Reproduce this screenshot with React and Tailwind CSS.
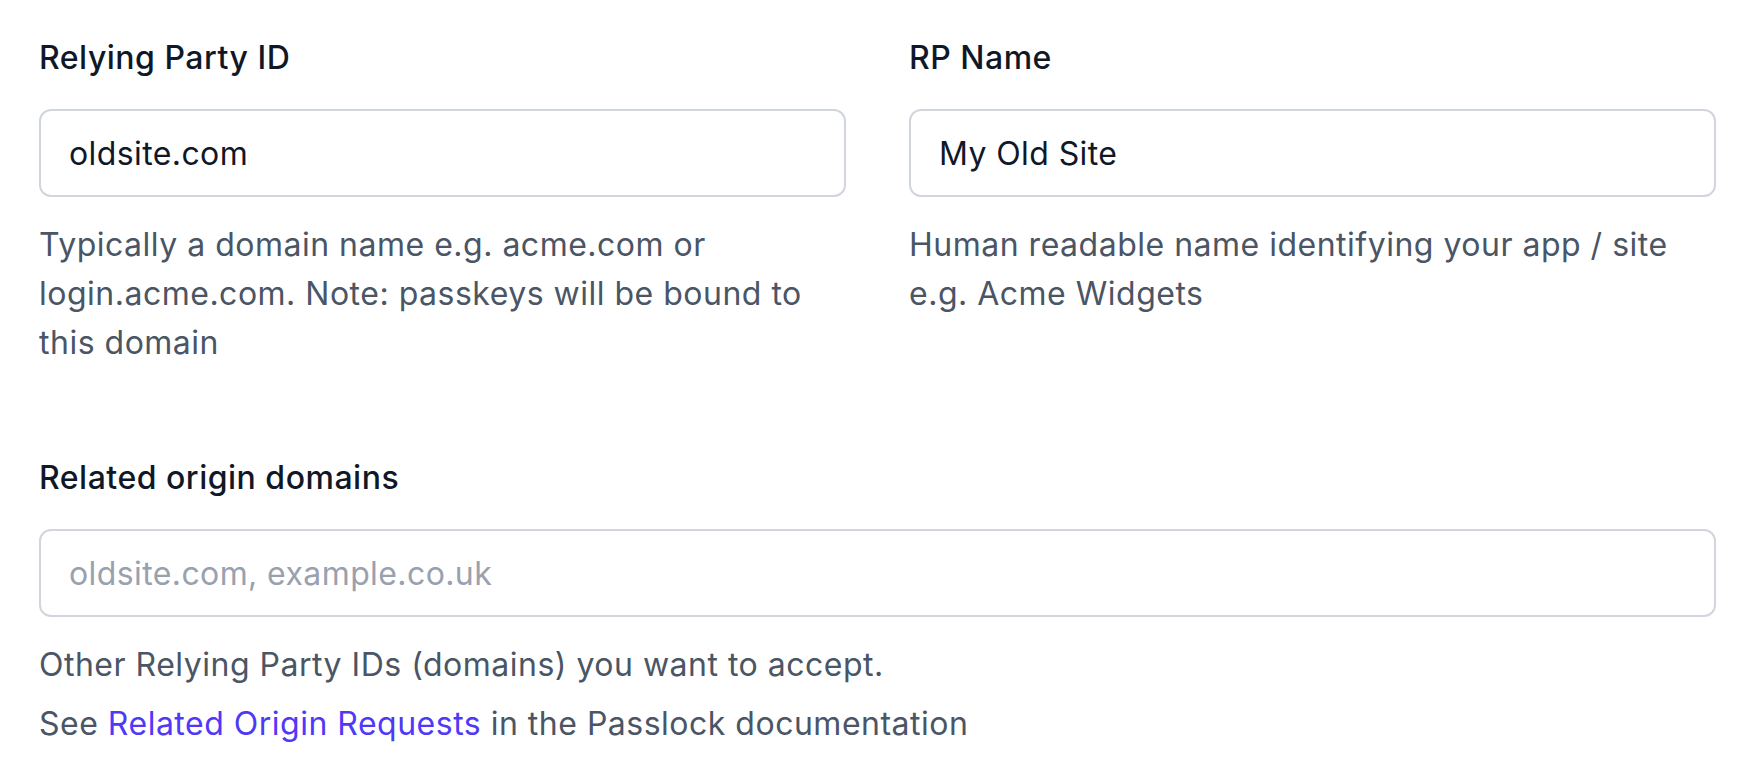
import React from 'react';

/**
 * Relying party settings form (rendered at 2x scale).
 */
function Field({ label, value, placeholder, children }) {
	return (
		<div className="flex flex-col min-w-0">
			<label className="text-[32px] leading-[48px] font-medium tracking-[0.5px] text-gray-900">{label}</label>
			<input
				type="text"
				defaultValue={value}
				placeholder={placeholder}
				className="mt-[27px] h-[88px] w-full rounded-[12px] border-2 border-gray-300 bg-white px-[28px] text-[32px] leading-[48px] tracking-[0.4px] text-gray-900 placeholder:text-gray-400 outline-none"
			/>
			{children}
		</div>
	);
}

export default function App() {
	return (
		<div
			className="min-h-[778px] w-full bg-white pl-[39px] pr-[42px] pt-[34px]"
			style={{ fontFamily: 'Inter, "Noto Sans", sans-serif' }}
		>
			<div className="grid grid-cols-2 gap-x-[63px] gap-y-[87px]">
				<Field label="Relying Party ID" value="oldsite.com">
					<p className="mt-[23px] text-[32px] leading-[49px] tracking-[0.5px] text-gray-600">
						Typically a domain name e.g. acme.com or login.acme.com. Note: passkeys will be bound to this domain
					</p>
				</Field>

				<Field label="RP Name" value="My Old Site">
					<p className="mt-[23px] text-[32px] leading-[49px] tracking-[0.5px] text-gray-600">
						Human readable name identifying your app / site e.g. Acme Widgets
					</p>
				</Field>

				<div className="col-span-2">
					<Field label="Related origin domains" placeholder="oldsite.com, example.co.uk">
						<p className="mt-[23px] text-[32px] leading-[49px] tracking-[0.5px] text-gray-600">
							Other Relying Party IDs (domains) you want to accept.
						</p>
						<p className="mt-[10px] text-[32px] leading-[49px] tracking-[0.5px] text-gray-600">
							See{' '}
							<a href="#" className="text-indigo-600">
								Related Origin Requests
							</a>{' '}
							in the Passlock documentation
						</p>
					</Field>
				</div>
			</div>
		</div>
	);
}
